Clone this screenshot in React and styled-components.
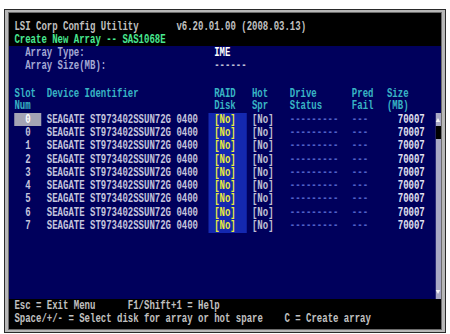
import styled, { createGlobalStyle, css } from "styled-components";

// text-mode grid: 80 columns; cells drawn wide and squeezed to 5.4px by the canvas transform
const FONT = 12;
const CW = FONT * 0.6;
const c = (n) => `${n * CW}px`;
const ROW = 13.3;
const DROP = 1.8;

const GlobalStyle = createGlobalStyle`
  html, body { margin: 0; padding: 0; background: #fff; }
  #root { width: 450px; height: 334px; overflow: hidden; padding-top: 9px; box-sizing: border-box; }
`;

// glyphs sit a little low in their cell, like the VGA font
const cellText = css`
  box-sizing: border-box;
  height: ${ROW}px;
  padding-top: ${DROP}px;
  line-height: ${ROW - DROP}px;
`;

const Frame = styled.div`
  box-sizing: border-box;
  margin-left: 4px;
  width: 442px;
  height: 324px;
  border: 1px solid #2a2a2a;
  background: #b8b8b8;
  padding: 2px 3px;
`;

const Screen = styled.div`
  box-sizing: border-box;
  height: 100%;
  border: 1px solid #6c6c6c;
  background: #000;
  overflow: hidden;
`;

const Canvas = styled.div`
  width: ${c(80)};
  height: 100%;
  transform: scaleX(${5.4 / CW});
  transform-origin: left top;
  display: flex;
  flex-direction: column;
  font-family: "Liberation Mono", "DejaVu Sans Mono", monospace;
  font-size: ${FONT}px;
  font-weight: bold;
  white-space: pre;
  color: #c8c8d8;
`;

const TopBar = styled.div`
  padding-top: 6.8px;
`;

const Line = styled.div`
  ${cellText};
  padding-left: ${c(1)};
  color: ${(p) => p.$color || "#c0c0c0"};
`;

const Panel = styled.div`
  background: #00005c;
  display: flex;
  flex-direction: column;
`;

const InfoRow = styled.div`
  ${cellText};
  display: grid;
  grid-template-columns: ${c(35)} 1fr;
  padding-left: ${c(3)};
`;

const Label = styled.span`
  color: #a4a8d4;
`;

const Value = styled.span`
  color: ${(p) => (p.$dim ? "#bcbcd4" : "#ffffff")};
`;

const Blank = styled.div`
  height: ${(p) => (p.$rows || 1) * ROW}px;
`;

const cols = `${c(1)} ${c(5)} ${c(1)} ${c(30)} ${c(7)} ${c(1)} ${c(7)} ${c(11.5)} ${c(6.5)} ${c(7)} 1fr`;

const HeadRow = styled.div`
  display: grid;
  grid-template-columns: ${cols};
  height: ${2 * ROW}px;
  color: #38b4c4;
`;

const Head = styled.div`
  grid-column: ${(p) => p.$col};
  box-sizing: border-box;
  height: ${2 * ROW}px;
  padding-top: ${DROP}px;
  line-height: ${ROW - DROP / 2}px;
  padding-left: ${(p) => (p.$pad ? c(p.$pad) : 0)};
`;

const Body = styled.div`
  display: flex;
  height: ${14 * ROW}px;
`;

const Table = styled.div`
  flex: 1;
`;

const TableRow = styled.div`
  display: grid;
  grid-template-columns: ${cols};
  height: ${ROW}px;
`;

const SlotCell = styled.div`
  ${cellText};
  grid-column: 2;
  padding-left: ${c(2)};
  background: ${(p) => (p.$active ? "#a4a4b4" : "transparent")};
  color: ${(p) => (p.$active ? "#ffffff" : "#c4c4dc")};
`;

const DeviceCell = styled.div`
  ${cellText};
  grid-column: 4;
  color: #c4c4dc;
`;

const RaidCell = styled.div`
  ${cellText};
  grid-column: 5;
  padding-left: ${c(1)};
  background: #1428b0;
  color: #eeee3c;
`;

const HotCell = styled.div`
  ${cellText};
  grid-column: 7;
  color: #c0c0d4;
`;

const DimCell = styled.div`
  ${cellText};
  grid-column: ${(p) => p.$col};
  color: #5060c8;
`;

const SizeCell = styled.div`
  ${cellText};
  grid-column: 10;
  text-align: right;
  color: #e0e0f0;
`;

const Scrollbar = styled.div`
  width: ${c(1)};
  background: #a8a8c4;
  display: flex;
  flex-direction: column;
`;

const Arrow = styled.div`
  height: ${ROW}px;
  display: flex;
  align-items: center;
  justify-content: center;
  &::after {
    content: "";
    border-left: 3px solid transparent;
    border-right: 3px solid transparent;
    ${(p) => (p.$down ? "border-top: 4px solid #f4f4f4;" : "border-bottom: 4px solid #f4f4f4;")}
  }
`;

const Thumb = styled.div`
  height: ${ROW}px;
  background: #000;
`;

const Spacer = styled.div`
  flex: 1;
`;

const Footer = styled.div``;

const slots = ["0", "0", "1", "2", "3", "4", "5", "6", "7"];

export default function App() {
  return (
    <>
      <GlobalStyle />
      <Frame>
        <Screen>
          <Canvas>
            <TopBar>
              <Line>LSI Corp Config Utility       v6.20.01.00 (2008.03.13)</Line>
              <Line $color="#48e890">Create New Array -- SAS1068E</Line>
            </TopBar>
            <Panel>
              <InfoRow>
                <Label>Array Type:</Label>
                <Value>IME</Value>
              </InfoRow>
              <InfoRow>
                <Label>Array Size(MB):</Label>
                <Value $dim>------</Value>
              </InfoRow>
              <Blank />
              <HeadRow>
                <Head $col={2}>{"Slot\nNum"}</Head>
                <Head $col={4}>Device Identifier</Head>
                <Head $col={5} $pad={1}>{"RAID\nDisk"}</Head>
                <Head $col={7}>{"Hot\nSpr"}</Head>
                <Head $col={8}>{"Drive\nStatus"}</Head>
                <Head $col={9}>{"Pred\nFail"}</Head>
                <Head $col={10}>{"Size\n(MB)"}</Head>
              </HeadRow>
              <Body>
                <Table>
                  {slots.map((s, i) => (
                    <TableRow key={i}>
                      <SlotCell $active={i === 0}>{s}</SlotCell>
                      <DeviceCell>SEAGATE ST973402SSUN72G 0400</DeviceCell>
                      <RaidCell>[No]</RaidCell>
                      <HotCell>[No]</HotCell>
                      <DimCell $col={8}>---------</DimCell>
                      <DimCell $col={9}>---</DimCell>
                      <SizeCell>70007</SizeCell>
                    </TableRow>
                  ))}
                </Table>
                <Scrollbar>
                  <Arrow />
                  <Thumb />
                  <Spacer />
                  <Arrow $down />
                </Scrollbar>
              </Body>
            </Panel>
            <Footer>
              <Line>Esc = Exit Menu      F1/Shift+1 = Help</Line>
              <Line>Space/+/- = Select disk for array or hot spare    C = Create array</Line>
            </Footer>
          </Canvas>
        </Screen>
      </Frame>
    </>
  );
}
